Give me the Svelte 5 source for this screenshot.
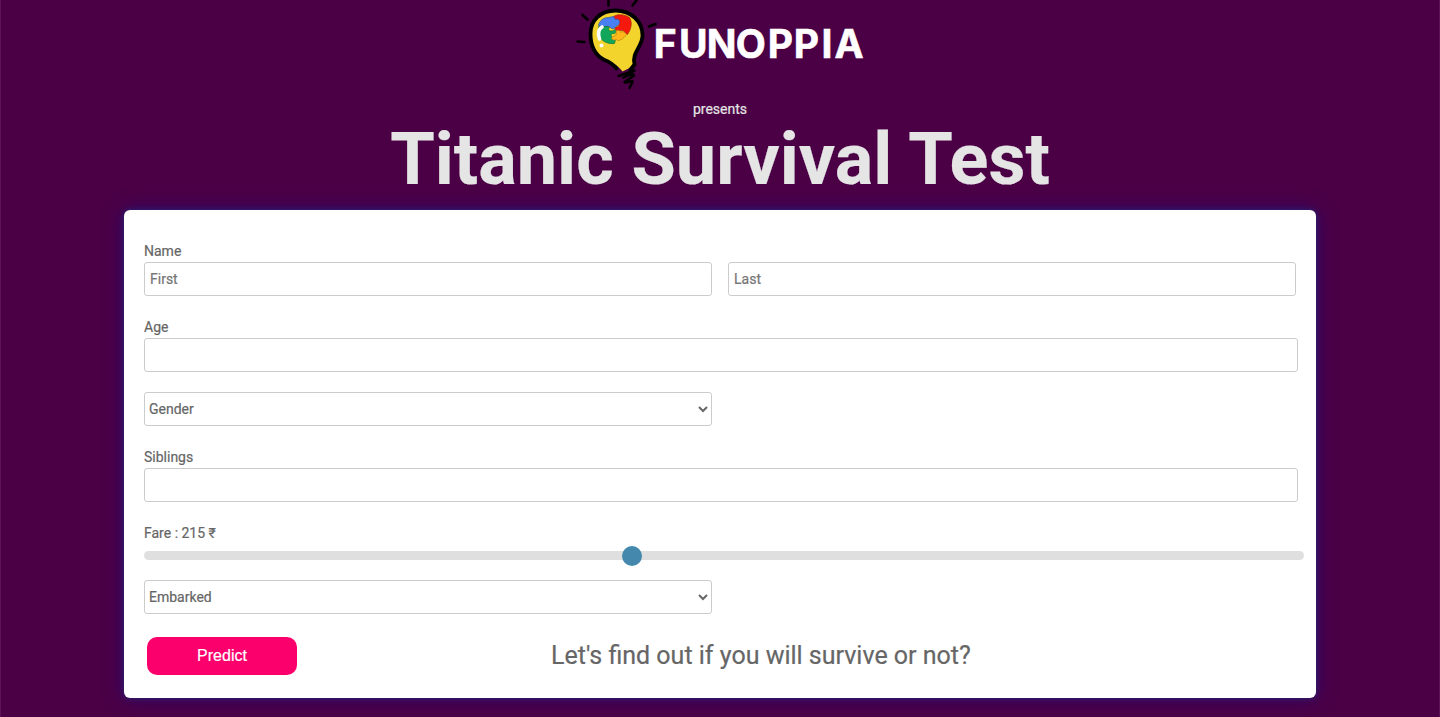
<script>
  let first = $state('');
  let last = $state('');
  let age = $state('');
  let siblings = $state('');
  let fare = $state(215);
  const maxFare = 513;
</script>

<div class="page">
  <header>
    <svg class="logo" width="300" height="95" viewBox="570 0 300 95" role="img" aria-label="Funoppia">
      <g transform="translate(569.500 -.5)">
        <path d="M21 34C21 21 31 11 46 11C62 11 73 22 73 36C73 46 63 53 65 66L53 72C49 66 42 63 35 60C25 55 21 46 21 34Z" fill="#f3d42c" />
        <path d="M47 69C44 65 39 62 34 60C25 55 21 46 21 34C21 21 31 11 46 11C62 11 73 22 73 36C73 47 62 53 65 65L61 70" fill="none" stroke="#000" stroke-width="3.800" stroke-linecap="round" />
        <g stroke-width=".7" stroke-linejoin="round">
          <path d="M44 17C48 14 56 15 60 18C63 23 62 29 58 35C55 33 55 31 52 31C49 31 49 33 46 30L45 28L49 27C50 24 49 21 45 21Z" fill="#f5180d" stroke="#a42b10" />
          <path d="M44 17L46 20C51 18 51 25 48 26C45 27 46 30 42 29C38 24 36 30 29 26C30 21 34 18 39 18Z" fill="#4880f3" stroke="#31539d" />
          <path d="M29 27C34 29 37 25 40 28C37 31 43 33 45 30C48 32 46 35 43 34C40 35 42 38 46 40L45 44C38 45 31 41 30 36Z" fill="#12a65a" stroke="#167339" />
          <path d="M47 35C45 31 50 29 51 33C53 31 55 33 57 35C55 38 52 41 48 41L47 40C43 42 40 38 44 37Z" fill="#ffb719" stroke="#b88716" />
        </g>
        <path d="M32.500 27.500C28.500 30 28.500 35 30 39.500" fill="none" stroke="#fff" stroke-width="3.600" stroke-linecap="round" />
        <circle cx="32" cy="46" r="2" fill="#fff" />
        <path d="M39 0V6M63 6L67 1M13 15.500L18 20M8 42L15 42.500M79.500 27L86 24.500" fill="none" stroke="#000" stroke-width="2.600" stroke-linecap="round" />
        <path d="M49 76.500L65 71L54 78C58 75.500 66 73.500 64 76.500L55 82.500C55 84.500 64 80 63 82.500L60 88.500" fill="none" stroke="#000" stroke-width="2.500" stroke-linecap="round" stroke-linejoin="round" />
      </g>
      <text x="653.800 679 706.800 735.800 767.800 793.800 821.500 834.500" y="58">FUNOPPIA</text>
    </svg>
    <p>presents</p>
    <h1>Titanic Survival Test</h1>
  </header>

  <form onsubmit={(e) => e.preventDefault()}>
    <div class="field">
      <label for="first">Name</label>
      <div class="names">
        <input id="first" placeholder="First" bind:value={first} />
        <input aria-label="Last" placeholder="Last" bind:value={last} />
      </div>
    </div>
    <div class="field">
      <label for="age">Age</label>
      <input id="age" class="wide" bind:value={age} />
    </div>
    <select aria-label="Gender"><option>Gender</option></select>
    <div class="field siblings">
      <label for="siblings">Siblings</label>
      <input id="siblings" class="wide" bind:value={siblings} />
    </div>
    <label class="fare" for="fare">Fare : {fare} ₹</label>
    <input id="fare" type="range" min="0" max={maxFare} bind:value={fare} />
    <select aria-label="Embarked"><option>Embarked</option></select>
    <div class="actions">
      <button>Predict</button>
      <span class="result">Let's find out if you will survive or not?</span>
    </div>
  </form>
</div>

<style>
  :global(body) { background: #4b0045; overflow: hidden; }
  * { box-sizing: border-box; }
  .page {
    height: 717px;
    border: solid #5b1554;
    border-width: 0 1px;
    font: 14px/22px Roboto, sans-serif;
    color: #666;
    -webkit-text-stroke: .2px;
  }
  header {
    display: flex;
    flex-direction: column;
    align-items: center;
    height: 210px;
    color: #e5e5e5;
  }
  .logo { flex: none; }
  .logo text { font: 700 39px Inter, sans-serif; fill: #fff; stroke: #fff; stroke-width: .6px; -webkit-text-stroke: 0; }
  p { margin: 3px 0 0; }
  h1 { margin: 0; font-size: 72px; line-height: 80px; font-weight: 700; white-space: nowrap; }
  form {
    width: 1192px;
    height: 488px;
    margin: 0 auto;
    padding: 30px 20px 0;
    border-radius: 6px;
    background: #fff;
    box-shadow: 0 0 6px #1e3c78b0, 0 0 20px #300070;
  }
  label { display: block; height: 22px; }
  .field { margin-bottom: 20px; }
  .names { display: flex; gap: 16px; }
  input, select {
    display: block;
    width: 568px;
    height: 34px;
    margin: 0;
    padding: 0 5px;
    border: 1px solid #ccc;
    border-radius: 3px;
    background: #fff;
    color: #666;
    font: 14px Roboto, sans-serif;
    outline: none;
  }
  input::placeholder { color: #757575; }
  select { padding: 0; }
  .wide { width: 1154px; }
  .siblings { margin-top: 20px; }
  input[type='range'] {
    appearance: none;
    width: 1160px;
    height: 9px;
    margin: 7px 0 20px;
    padding: 0;
    border: 0;
    border-radius: 5px;
    background: #dfdfdf;
  }
  input[type='range']::-webkit-slider-thumb {
    appearance: none;
    width: 20px;
    height: 20px;
    border-radius: 50%;
    background: #4489ad;
  }
  .actions { display: flex; align-items: center; margin: 23px 0 0 3px; }
  button {
    width: 150px;
    height: 38px;
    border: 0;
    border-radius: 10px;
    background: #fb006d;
    color: #fff;
    font: 16px "Liberation Sans", Arial, sans-serif;
    -webkit-text-stroke: .2px;
  }
  .result { margin-left: 254px; font-size: 25px; white-space: nowrap; }
</style>
